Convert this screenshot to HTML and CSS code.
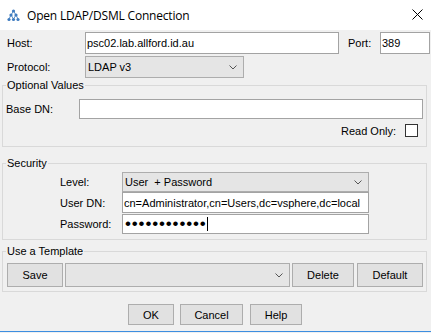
FILE: index.html
```html
<!DOCTYPE html>
<html lang="en">
<head>
    <meta charset="UTF-8">
    <title>Open LDAP/DSML Connection</title>
    <link rel="stylesheet" href="styles.css">
</head>
<body>
    <div class="window">
        <!-- Barra de título -->
        <div class="titlebar">
            <svg class="app-icon" width="13" height="13" viewBox="0 0 13 13">
                <g stroke="#5b8fc7" stroke-width="1" fill="none">
                    <path d="M6.5 2 L4 6 L2 10 M4 6 L6.5 10 M6.5 2 L9 6 L11 10 M9 6 L6.5 10"/>
                </g>
                <g fill="#3f7cc0">
                    <circle cx="6.5" cy="2" r="1.6"/>
                    <circle cx="4" cy="6" r="1.6"/>
                    <circle cx="9" cy="6" r="1.6"/>
                    <circle cx="2" cy="10.5" r="1.6"/>
                    <circle cx="6.5" cy="10.5" r="1.6"/>
                    <circle cx="11" cy="10.5" r="1.6"/>
                </g>
            </svg>
            <span class="title">Open LDAP/DSML Connection</span>
            <svg class="close" width="11" height="11" viewBox="0 0 11 11">
                <path d="M0.5 0.5 L10.5 10.5 M10.5 0.5 L0.5 10.5" stroke="#000" stroke-width="1"/>
            </svg>
        </div>

        <div class="dialog">
            <div class="row row-host">
                <label class="lbl lbl-main">Host:</label>
                <div class="field host">psc02.lab.allford.id.au</div>
                <label class="lbl lbl-port">Port:</label>
                <div class="field port">389</div>
            </div>
            <div class="row row-proto">
                <label class="lbl lbl-main">Protocol:</label>
                <div class="combo proto">
                    <span>LDAP v3</span>
                    <svg class="chev" width="8" height="5" viewBox="0 0 8 5"><path d="M0.5 0.5 L4 4 L7.5 0.5" stroke="#555" fill="none"/></svg>
                </div>
            </div>

            <!-- Valores opcionais -->
            <fieldset class="group optional">
                <legend>Optional Values</legend>
                <div class="row row-base">
                    <label class="lbl lbl-base">Base DN:</label>
                    <div class="field base"></div>
                </div>
                <div class="row row-readonly">
                    <label class="lbl">Read Only:</label>
                    <span class="checkbox"></span>
                </div>
            </fieldset>

            <!-- Segurança -->
            <fieldset class="group security">
                <legend>Security</legend>
                <div class="row row-sec row-level">
                    <label class="lbl lbl-sec">Level:</label>
                    <div class="combo level">
                        <span>User&nbsp; + Password</span>
                        <svg class="chev" width="8" height="5" viewBox="0 0 8 5"><path d="M0.5 0.5 L4 4 L7.5 0.5" stroke="#555" fill="none"/></svg>
                    </div>
                </div>
                <div class="row row-sec row-user">
                    <label class="lbl lbl-sec">User DN:</label>
                    <div class="field user">cn=Administrator,cn=Users,dc=vsphere,dc=local</div>
                </div>
                <div class="row row-sec row-pass">
                    <label class="lbl lbl-sec">Password:</label>
                    <div class="field pass"><span class="dots">••••••••••••</span><span class="caret"></span></div>
                </div>
            </fieldset>

            <!-- Modelo -->
            <fieldset class="group template">
                <legend>Use a Template</legend>
                <div class="row row-template">
                    <button class="btn btn-save">Save</button>
                    <div class="combo tpl">
                        <span></span>
                        <svg class="chev" width="8" height="5" viewBox="0 0 8 5"><path d="M0.5 0.5 L4 4 L7.5 0.5" stroke="#555" fill="none"/></svg>
                    </div>
                    <button class="btn btn-delete">Delete</button>
                    <button class="btn btn-default">Default</button>
                </div>
            </fieldset>

            <div class="actions">
                <button class="btn btn-ok">OK</button>
                <button class="btn btn-cancel">Cancel</button>
                <button class="btn btn-help">Help</button>
            </div>
        </div>
        <div class="below"></div>
    </div>
</body>
</html>
```

FILE: styles.css
```css
html, body {
    margin: 0;
    padding: 0;
}
body {
    width: 431px;
    height: 333px;
    overflow: hidden;
    background: #f0f0f0;
    font-family: "Liberation Sans", Arial, sans-serif;
    font-size: 11px;
    color: #000;
}
.titlebar {
    display: flex;
    align-items: center;
    height: 30px;
    background: #fff;
    padding-left: 7px;
    box-sizing: border-box;
}
.app-icon {
    margin-right: 7px;
    margin-top: 1px;
}
.title {
    font-family: "Open Sans", "Noto Sans", sans-serif;
    font-size: 12px;
    letter-spacing: -0.2px;
    flex: 1;
}
.close {
    margin-right: 8px;
    margin-top: -2px;
}
.row {
    display: flex;
    align-items: center;
}
.lbl {
    white-space: nowrap;
}
.field {
    box-sizing: border-box;
    background: #fff;
    border: 1px solid #a3a3a3;
    padding-left: 1px;
    display: flex;
    align-items: center;
    white-space: nowrap;
    overflow: hidden;
}
.combo {
    box-sizing: border-box;
    background: #e5e5e5;
    border: 1px solid #adadad;
    display: flex;
    align-items: center;
    justify-content: space-between;
    padding: 0 6px 0 2px;
}
.btn {
    box-sizing: border-box;
    background: #e1e1e1;
    border: 1px solid #adadad;
    font-family: "Liberation Sans", Arial, sans-serif;
    font-size: 11px;
    color: #000;
    padding: 0;
    margin: 0;
}
.row-host {
    margin-top: 2px;
    height: 22px;
    padding-left: 7px;
}
.lbl-main {
    width: 78px;
}
.host {
    width: 254px;
    height: 22px;
}
.lbl-port {
    margin-left: 9px;
    width: 32px;
}
.port {
    width: 50px;
    height: 22px;
}
.row-proto {
    margin-top: 2px;
    height: 22px;
    padding-left: 7px;
}
.proto {
    width: 159px;
    height: 22px;
}
.group {
    margin: 0 4px 0 2px;
    padding: 0 3px;
    border: 1px solid #d9d9d9;
    min-width: 0;
}
.group legend {
    padding: 0 1px;
    line-height: 13px;
    height: 13px;
}
.optional {
    margin-top: 1px;
    padding-bottom: 9px;
}
.row-base {
    margin-top: 7px;
}
.lbl-base {
    width: 73px;
}
.base {
    flex: 1;
    height: 20px;
}
.row-readonly {
    margin-top: 5px;
    justify-content: flex-end;
    height: 13px;
}
.checkbox {
    box-sizing: border-box;
    width: 13px;
    height: 13px;
    border: 1px solid #333;
    background: #fff;
    margin-left: 9px;
    margin-right: 5px;
}
.security {
    margin-top: 10px;
    padding-bottom: 5px;
}
.row-sec {
    padding-left: 54px;
}
.lbl-sec {
    width: 62px;
}
.row-level {
    margin-top: 2px;
}
.level {
    width: 247px;
    height: 20px;
}
.user {
    width: 247px;
    height: 21px;
}
.row-pass {
    margin-top: 1px;
}
.pass {
    width: 247px;
    height: 20px;
    padding-left: 2px;
}
.dots {
    font-size: 17px;
    letter-spacing: 0.85px;
    line-height: 18px;
}
.caret {
    width: 1px;
    height: 14px;
    background: #000;
}
.template {
    margin-top: 5px;
    padding-bottom: 4px;
}
.row-template {
    margin-top: 5px;
    height: 24px;
    padding-left: 1px;
}
.row-template .btn {
    height: 24px;
}
.btn-save {
    width: 56px;
}
.tpl {
    width: 225px;
    height: 24px;
    margin-left: 2px;
}
.btn-delete {
    width: 62px;
    margin-left: 2px !important;
}
.btn-default {
    width: 66px;
    margin-left: 3px !important;
}
.actions {
    display: flex;
    justify-content: center;
    gap: 6px;
    margin-top: 12px;
    padding-right: 1px;
}
.actions .btn {
    height: 21px;
}
.btn-ok {
    width: 46px;
}
.btn-cancel {
    width: 63px;
}
.btn-help {
    width: 52px;
    margin-left: 1px !important;
}
.below {
    margin-top: 6px;
    height: 1px;
    background: #3d8ee0;
}
```
